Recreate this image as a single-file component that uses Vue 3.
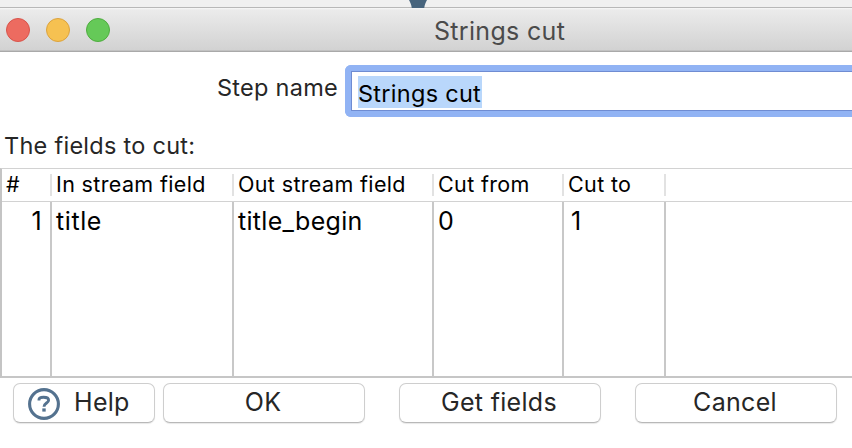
<script setup>
import { ref } from 'vue'

const stepName = ref('Strings cut')
const columns = [
  { key: 'num', label: '#' },
  { key: 'input', label: 'In stream field' },
  { key: 'output', label: 'Out stream field' },
  { key: 'from', label: 'Cut from' },
  { key: 'to', label: 'Cut to' },
]
const row = { num: '1', input: 'title', output: 'title_begin', from: '0', to: '1' }
</script>

<template>
  <div class="screen">
    <div class="backdrop">
      <svg class="arrow" width="18" height="8" viewBox="0 0 18 8"><path d="M0 0H18C17 2 15.8 4 15.2 8H2.8C2.2 4 1 2 0 0Z" fill="#47647d" /></svg>
    </div>
    <header class="titlebar">
      <div class="lights">
        <span class="light red"></span>
        <span class="light yellow"></span>
        <span class="light green"></span>
      </div>
      <h1 class="title">Strings cut</h1>
    </header>
    <div class="step">
      <label class="step-label">Step name</label>
      <div class="field"><span class="selected">{{ stepName }}</span></div>
    </div>
    <div class="caption">The fields to cut:</div>
    <div class="table">
      <div class="head">
        <div v-for="c in columns" :key="c.key" class="th"><span>{{ c.label }}</span></div>
      </div>
      <div class="body">
        <div v-for="c in columns" :key="c.key" class="td" :class="'c-' + c.key"><span>{{ row[c.key] }}</span></div>
      </div>
    </div>
    <footer class="actions">
      <button class="btn help">
        <svg width="32" height="32" viewBox="0 0 32 32" fill="none" stroke="#54728f">
          <circle cx="16" cy="16" r="14.4" stroke-width="3.1" />
          <path d="M11 12.4V11.6C11 9.8 12.6 9.2 15.6 9.2C18.8 9.2 20.6 10.2 20.6 12.2C20.6 15 16 15.2 16 18.8" stroke-width="2.9" />
          <path d="M16 20.4V23.6" stroke-width="3.4" />
        </svg>
        <span>Help</span>
      </button>
      <button class="btn wide"><span>OK</span></button>
      <button class="btn wide"><span>Get fields</span></button>
      <button class="btn wide"><span>Cancel</span></button>
    </footer>
  </div>
</template>

<style>
body {
  margin: 0;
  background: #fff;
}
</style>

<style scoped>
.screen {
  width: 852px;
  height: 448px;
  overflow: hidden;
  background: #fff;
  color: #262626;
  font-family: Inter, sans-serif;
  box-sizing: border-box;
}
.screen * {
  box-sizing: border-box;
}
.backdrop {
  height: 8px;
  background: linear-gradient(#f0f0f0 7px, #b8b8b8 7px);
  padding-left: 409px;
}
.arrow {
  display: block;
}
.titlebar {
  display: grid;
  grid-template-columns: 434px 1fr;
  align-items: center;
  height: 44px;
  background: linear-gradient(#f8f8f8 0, #ebebeb 2px, #d2d2d2 42px, #c2c2c2 42px, #c2c2c2 43px);
  border-bottom: 1px solid #a9a9a9;
}
.lights {
  display: flex;
  gap: 16px;
  padding-left: 6px;
}
.light {
  width: 24px;
  height: 24px;
  border-radius: 50%;
  border: 1px solid;
}
.red { background: #ed6b60; border-color: #d8544b; }
.yellow { background: #f6c151; border-color: #dca33e; }
.green { background: #65c958; border-color: #4fad3f; }
.title {
  margin: 0;
  padding-top: 2px;
  font-weight: 400;
  font-size: 25px;
  line-height: 30px;
  letter-spacing: 0.32px;
  color: #4b4b4b;
  white-space: nowrap;
}
.step {
  display: flex;
  padding-top: 13px;
}
.step-label {
  width: 345px;
  padding: 8px 7px 0 0;
  text-align: right;
  font-size: 23.5px;
  line-height: 30px;
  letter-spacing: 0.27px;
}
.field {
  flex: 1;
  height: 52px;
  border: 6px solid #91b3f4;
  border-right: 0;
  border-radius: 6px 0 0 6px;
  box-shadow: inset 0 1px #6f8cd2, inset 1px -1px #6f8cd2;
  padding: 5px 0 0 7px;
  font-size: 23.5px;
  letter-spacing: 0.28px;
  color: #000;
}
.selected {
  display: inline-block;
  height: 32px;
  line-height: 35px;
  width: 124px;
  background: #b9d7fb;
  white-space: nowrap;
}
.caption {
  height: 51px;
  padding: 14px 0 0 4px;
  font-size: 23.5px;
  line-height: 30px;
  letter-spacing: 0.27px;
}
.table {
  height: 210px;
  border-left: 2px solid #c4c4c4;
  border-top: 1px solid #d2d2d2;
  border-bottom: 2px solid #c6c6c6;
  color: #000;
}
.head,
.body {
  display: grid;
  grid-template-columns: 50px 182px 200px 130px 102px;
}
.head {
  height: 33px;
  padding-top: 5px;
  border-bottom: 1px solid #d2d2d2;
}
.body {
  height: 174px;
}
.th {
  height: 22px;
  border-right: 2px solid #e2e2e2;
  font-size: 21.5px;
  line-height: 20px;
  letter-spacing: 0.36px;
  padding-left: 4px;
  white-space: nowrap;
}
.td {
  border-right: 2px solid #c8c8c8;
  font-size: 25px;
  line-height: 30px;
  letter-spacing: 0.3px;
  padding: 4px 0 0 4px;
}
.td.c-input {
  letter-spacing: 0.6px;
}
.td.c-num {
  text-align: right;
  padding-right: 8px;
}
.td.c-to {
  padding-left: 7px;
}
.actions {
  display: flex;
  gap: 34px;
  padding: 5px 0 0 13px;
}
.btn {
  width: 202px;
  height: 40px;
  margin: 0;
  padding: 0 2px 0 0;
  border: 1px solid #cecece;
  border-bottom-color: #b8b8b8;
  border-radius: 7px;
  background: #fff;
  font: 25px/36px Inter, sans-serif;
  letter-spacing: 0.3px;
  color: #262626;
  box-shadow: 0 1px 1px #00000018;
  text-align: center;
}
.btn > span {
  display: block;
  margin-top: -2px;
}
.help {
  display: flex;
  align-items: center;
  gap: 14px;
  width: 142px;
  margin-right: -26px;
  padding-left: 14px;
}
.help svg {
  margin-top: 2px;
}
</style>
